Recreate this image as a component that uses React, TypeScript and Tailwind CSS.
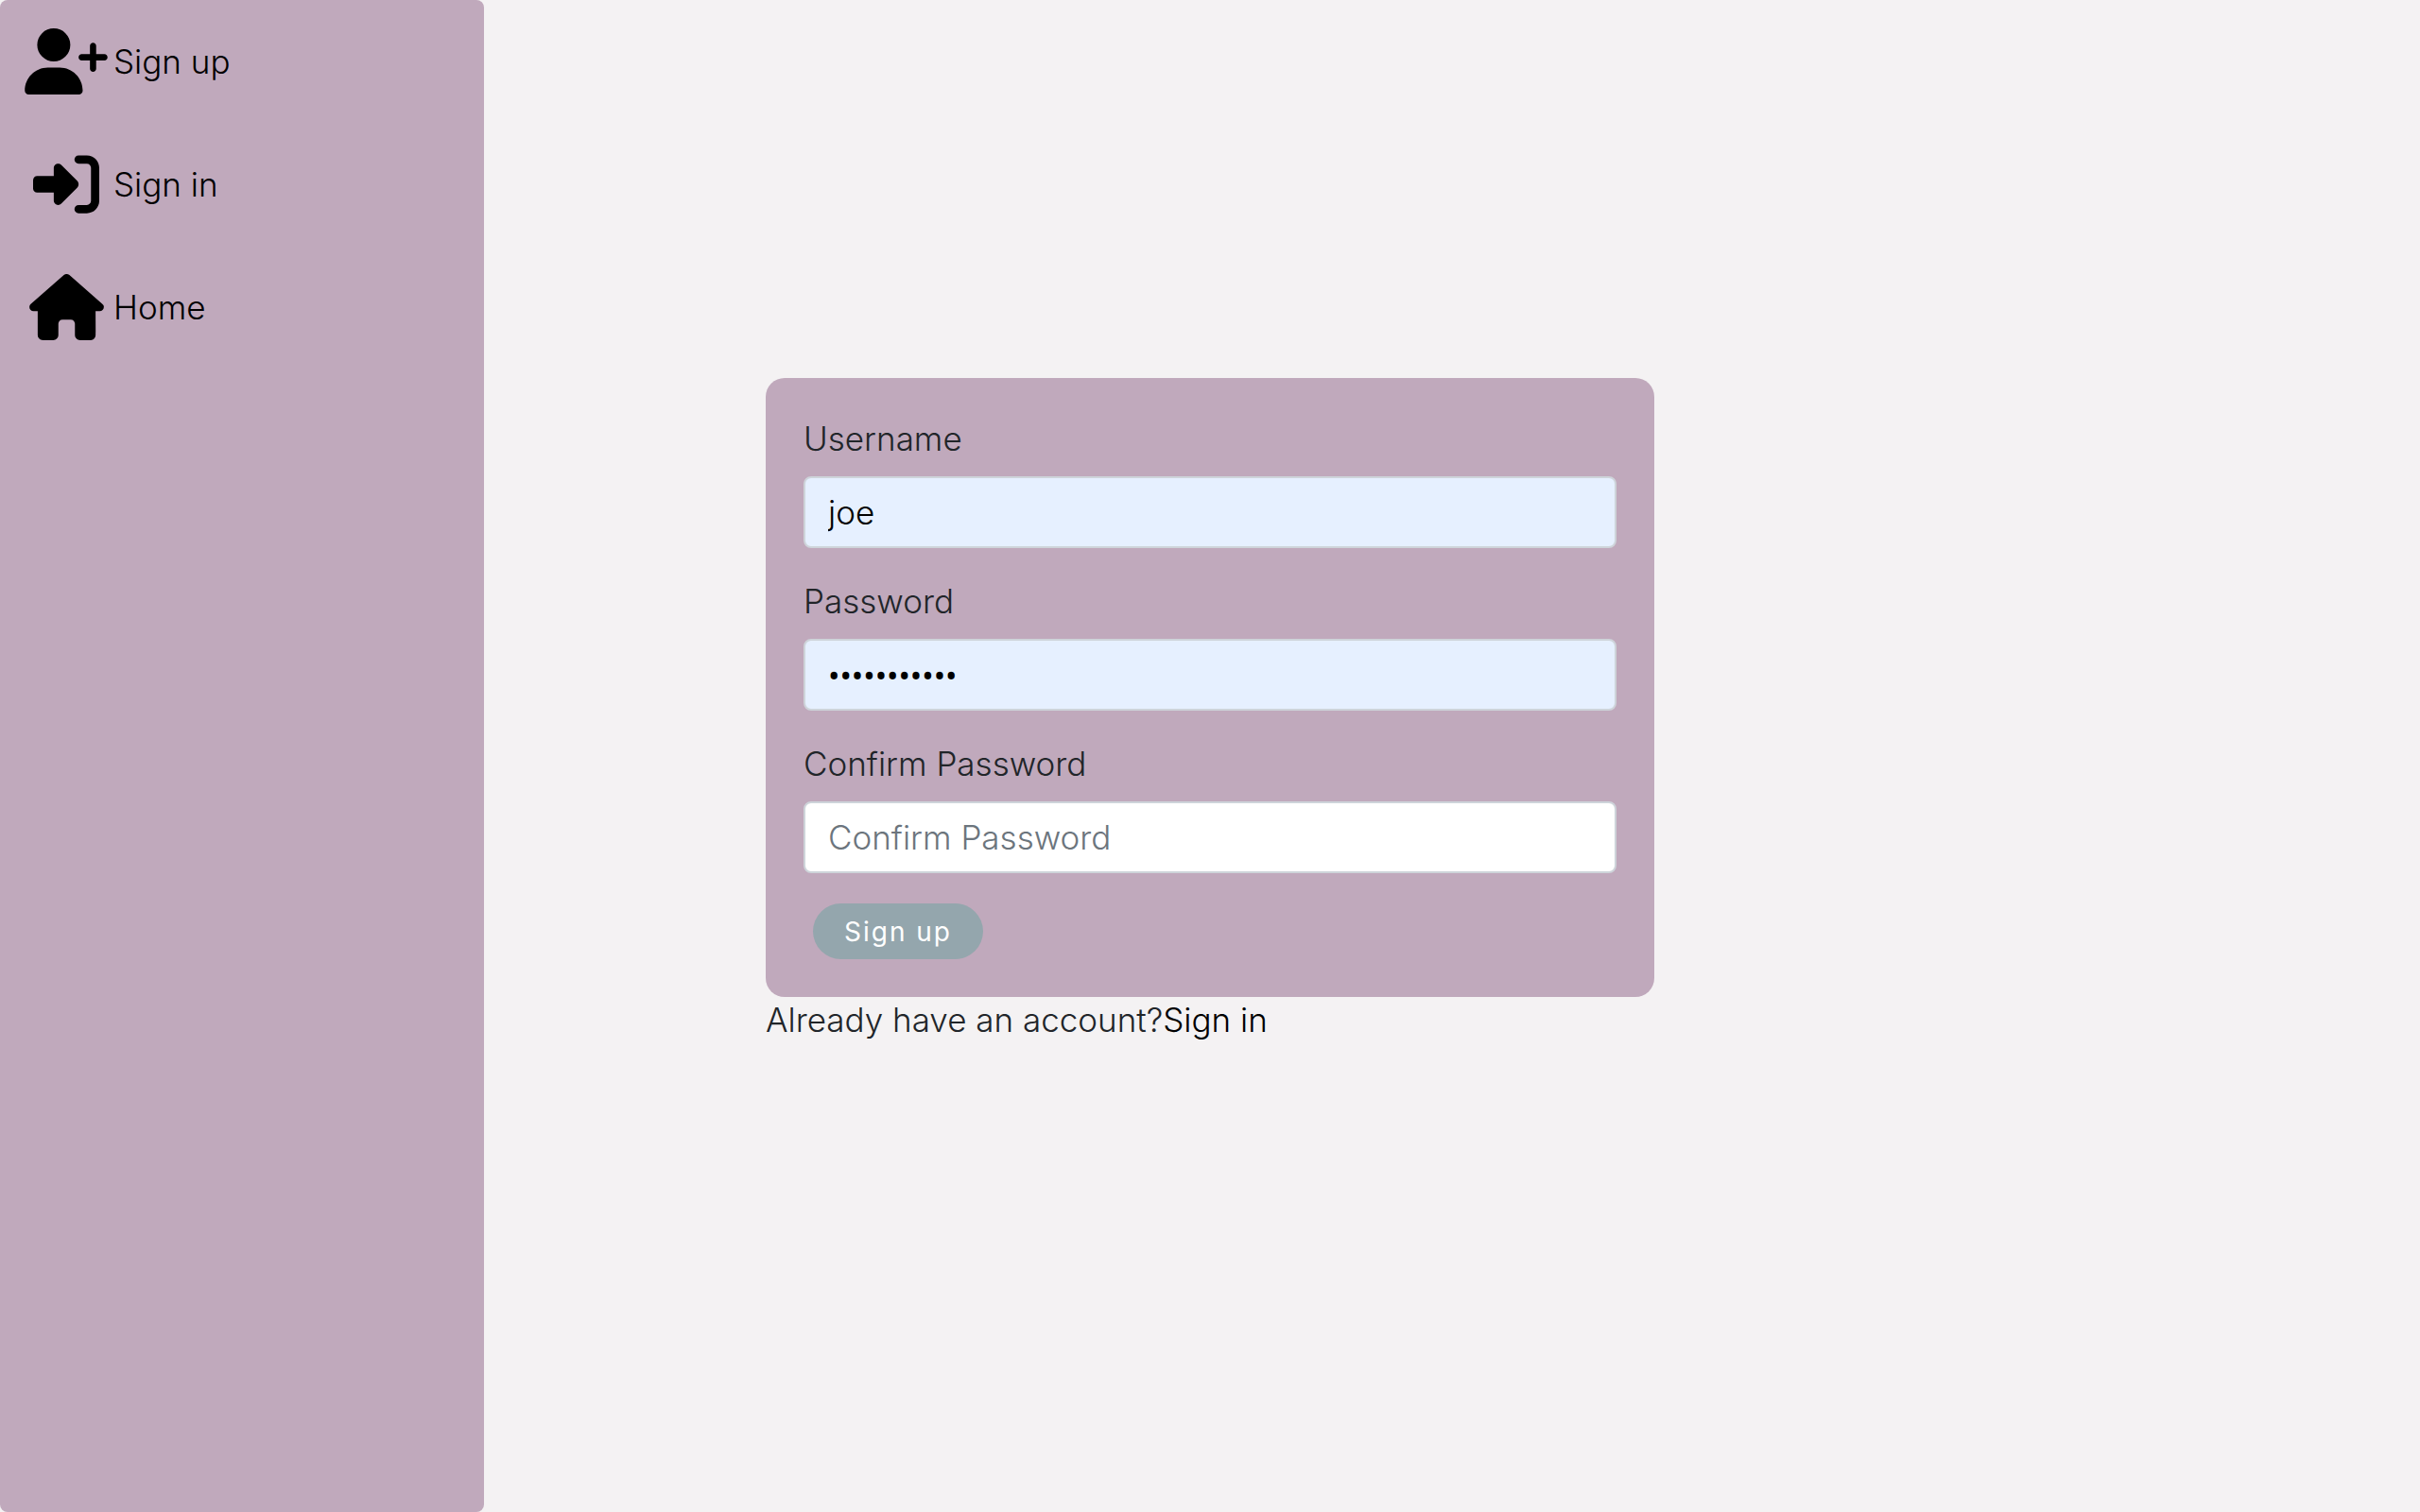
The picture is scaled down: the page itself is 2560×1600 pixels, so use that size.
import { FaHouse, FaRightToBracket, FaUserPlus } from "react-icons/fa6";
import type { IconType } from "react-icons";

const links: { label: string; href: string; Icon: IconType; size: string }[] = [
  { label: "Sign up", href: "#signup", Icon: FaUserPlus, size: "h-[70px] w-[88px]" },
  { label: "Sign in", href: "#signin", Icon: FaRightToBracket, size: "h-[70px] w-[70px]" },
  { label: "Home", href: "#home", Icon: FaHouse, size: "h-[70px] w-[79px]" },
];

function Sidebar() {
  return (
    <aside className="min-h-screen w-[512px] rounded-lg bg-[#c0a9bc]">
      <nav>
        <ul>
          {links.map(({ label, href, Icon, size }) => (
            <li key={label} className="flex h-[130px] items-center pl-[26px]">
              <a href={href} className="flex items-center gap-[6px] text-black">
                <span className="flex w-[88px] justify-center">
                  <Icon className={size} aria-hidden="true" />
                </span>
                <span>{label}</span>
              </a>
            </li>
          ))}
        </ul>
      </nav>
    </aside>
  );
}

const inputBase =
  "block h-[76px] w-full rounded-lg border-2 border-[#ced4da] px-6 outline-none placeholder:text-[#6c757d] placeholder:opacity-100";

export default function App() {
  return (
    <div className="grid min-h-screen grid-cols-[1fr_minmax(0,940px)_1fr] bg-[#f4f2f3] font-['Inter',sans-serif] text-[35px] leading-[48px] font-light text-[#212529]">
      <Sidebar />
      <main className="pt-[25vh]">
        <form className="rounded-[20px] bg-[#c0a9bc] p-10" onSubmit={(e) => e.preventDefault()}>
          <div className="mb-8">
            <label htmlFor="username" className="mb-4 block">
              Username
            </label>
            <input id="username" type="text" defaultValue="joe" className={`${inputBase} bg-[#e6f0ff] text-black`} />
          </div>
          <div className="mb-8">
            <label htmlFor="password" className="mb-4 block">
              Password
            </label>
            <input
              id="password"
              type="password"
              defaultValue="joepassword"
              className={`${inputBase} bg-[#e6f0ff] font-['Noto_Sans',sans-serif] text-[33px] font-normal text-black`}
            />
          </div>
          <div className="mb-8">
            <label htmlFor="confirm" className="mb-4 block">
              Confirm Password
            </label>
            <input id="confirm" type="password" placeholder="Confirm Password" className={`${inputBase} bg-white`} />
          </div>
          <button
            type="submit"
            className="ml-[10px] block h-[59px] w-[180px] rounded-full bg-[#94a6ad] text-[28px] leading-[40px] font-normal tracking-[2px] text-white"
          >
            Sign up
          </button>
        </form>
        <p>
          Already have an account?
          <a href="#signin" className="text-black">
            Sign in
          </a>
        </p>
      </main>
    </div>
  );
}
